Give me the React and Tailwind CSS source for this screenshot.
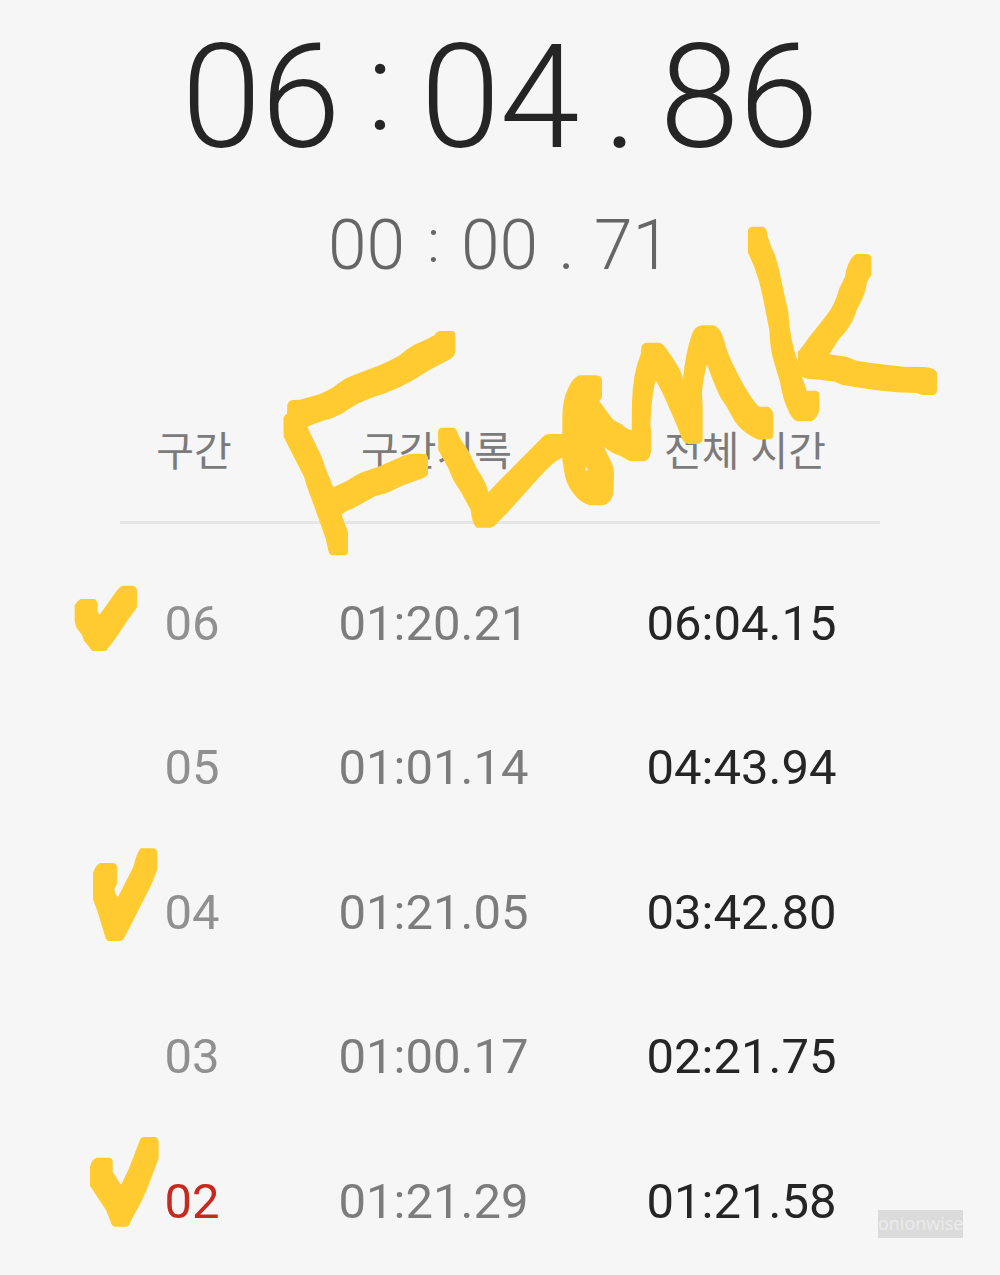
const laps = [
  { no: "06", lap: "01:20.21", total: "06:04.15" },
  { no: "05", lap: "01:01.14", total: "04:43.94" },
  { no: "04", lap: "01:21.05", total: "03:42.80" },
  { no: "03", lap: "01:00.17", total: "02:21.75" },
  { no: "02", lap: "01:21.29", total: "01:21.58", slowest: true },
];

// marker strokes, each drawn at 3x and placed with x / y
const strokes = [
  {
    x: 270,
    y: 320,
    d: "M510 33L548 33Q556 35 556 45L556 95Q554 108 542 116L478 150L430 180Q390 203 345 220Q280 240 245 262Q215 284 185 295Q140 307 112 321L155 410L165 440L190 502L230 483Q270 456 290 452L325 440L400 407Q415 401 430 401L463 402Q474 404 474 415L474 460Q472 470 460 474L400 496L350 519L315 529L250 565Q225 574 215 584L234 636L234 695Q232 706 222 706L188 706Q178 705 175 692L168 660L158 630L133 560L110 497L102 470L41 350L40 300Q40 286 51 281L52 255Q55 241 68 240L90 239L150 222Q180 208 190 202Q215 182 235 172Q280 153 325 137Q370 118 390 105Q410 88 430 76L470 58L493 46Q500 34 510 33Z",
  },
  {
    x: 270,
    y: 320,
    d: "M515 323L550 323Q560 325 563 340Q568 355 580 370Q600 398 608 420L620 445Q648 485 655 517L690 480L815 354Q825 342 840 342L900 342L900 400L860 422Q840 435 805 475L715 575L670 620L660 623L620 623Q606 612 602 570L575 520L550 480L535 445L505 390L504 335Q506 324 515 323Z",
  },
  {
    x: 540,
    y: 310,
    d: "M118 196L170 196Q186 199 186 212L186 262L178 274L220 330L245 343Q260 358 275 361L276 280Q278 190 303 130Q300 99 320 98L360 98Q372 103 385 125Q425 180 429 208Q436 130 455 75Q462 50 485 46L520 46Q540 50 552 90Q560 125 575 155L600 205Q635 270 657 290L685 290Q698 297 700 315L700 375Q698 388 688 388L655 389Q610 370 585 335L560 290L540 260Q515 205 501 162Q488 210 486 250L488 290L488 390Q484 402 470 402L445 402Q430 398 425 385L410 345L375 265Q355 222 347 212Q335 250 331 345L334 365L334 420Q330 453 312 454L270 454L240 437Q210 427 192 410L208 445Q222 470 222 490L220 550Q214 580 190 586L150 586Q120 578 100 550Q76 520 72 480L67 450L67 320Q68 270 82 240Q98 202 118 196ZM137 467L143 481L137 482Z",
  },
  {
    x: 730,
    y: 210,
    d: "M65 50L100 50Q110 52 112 75Q120 105 135 135Q145 165 155 215Q165 265 175 305Q178 380 203 455L204 425Q215 415 235 385L290 315Q315 285 328 235L345 200Q350 160 372 136L380 132L412 132Q424 135 424 145L424 195L411 215Q408 250 380 300Q375 325 347 365L325 390L298 433L350 440L380 452L430 460L520 470L580 471Q620 474 621 490L621 540Q620 555 608 555L575 555L560 549L500 547L440 541L370 530L335 524L315 515L270 509L235 507L215 500Q225 520 230 542L258 542Q268 545 268 555L268 600Q262 625 245 634L202 634Q185 630 172 595Q158 565 150 515L133 460Q120 420 118 360L105 295Q95 240 83 200Q70 160 54 128L54 60Q57 51 65 50Z",
  },
  {
    x: 60,
    y: 570,
    d: "M62 87L100 87Q111 89 113 100L113 126L119 134L170 62Q180 48 190 47L217 47Q230 49 231 60L231 112L205 148L165 208L143 236Q141 243 132 243L98 243Q91 240 86 229L72 212L66 194L55 181Q45 168 44 150L44 105Q52 92 62 87Z",
  },
  {
    x: 70,
    y: 830,
    d: "M90 99L130 99Q140 101 141 110L141 162L133 177Q135 190 143 203L190 110Q200 70 212 55L250 55Q261 57 262 68L262 118L245 162L175 300L160 328Q157 333 148 333L115 333Q107 330 104 315L83 245L69 207L69 130Q75 107 90 99Z",
  },
  {
    x: 70,
    y: 1120,
    d: "M80 113L115 113Q127 114 128 124L128 155L153 195L175 150L210 60Q213 51 222 51L255 51Q264 53 266 65L266 115L230 210Q210 255 195 280L180 308Q178 320 168 320L135 320Q125 318 122 305L108 270Q85 235 60 197L60 140Q65 118 80 113Z",
  },
];

function MainTime() {
  return (
    <div className="flex h-[145px] justify-center pl-[3px] text-[144px] leading-[145px] font-light text-[#252525]">
      <span className="w-[162px] tracking-[-0.6px]">06</span>
      <span className="w-[77px] pr-1 text-center text-[125px] leading-[124px]">:</span>
      <span className="w-[162px] tracking-[-0.6px]">04</span>
      <span className="w-[77px] pr-px text-center">.</span>
      <span className="w-[162px] tracking-[-0.6px]">86</span>
    </div>
  );
}

function LapTime() {
  return (
    <div className="mt-[41px] flex h-[70px] justify-center text-[69.5px] leading-[70px] font-light text-[#666666]">
      <span className="w-[78px]">00</span>
      <span className="w-[55px] text-center text-[62px] leading-[59px]">:</span>
      <span className="w-[78px]">00</span>
      <span className="w-[55px] text-center">.</span>
      <span className="w-[78px]">71</span>
    </div>
  );
}

function Marker() {
  return (
    <svg className="pointer-events-none absolute inset-0 h-[1275px] w-[1000px]" viewBox="0 0 1000 1275" fill="#ffcb31">
      {strokes.map((s, i) => (
        <path key={i} d={s.d} fillRule="evenodd" transform={`translate(${s.x} ${s.y}) scale(0.33333)`} />
      ))}
    </svg>
  );
}

export default function App() {
  return (
    <main className="relative h-[1275px] w-[1000px] overflow-hidden bg-[#f6f6f6] pt-[25px] font-['Roboto','Noto_Sans_CJK_KR',sans-serif]">
      <MainTime />
      <LapTime />
      <section className="mx-[120px] mt-[115px]">
        <div className="grid h-[128px] grid-cols-[148px_337px_275px] items-center border-b-[3px] border-[#e6e6e6] pb-[21px] text-center text-[41px] leading-[60px] text-[#7b7b7b] font-['Noto_Sans_CJK_KR',sans-serif]">
          <span>구간</span>
          <span>구간기록</span>
          <span className="pl-[5px] whitespace-nowrap [word-spacing:2px]">전체 시간</span>
        </div>
        <div className="pt-[27px]">
          {laps.map((lap) => (
            <div key={lap.no} className="grid h-[144.5px] grid-cols-[144px_339px_277px] items-center text-center text-[49px]">
              <span className={lap.slowest ? "text-[#c8281e]" : "text-[#909090]"}>{lap.no}</span>
              <span className="text-[#7c7c7c]">{lap.lap}</span>
              <span className="text-[#252525]">{lap.total}</span>
            </div>
          ))}
        </div>
      </section>
      <Marker />
      <div className="absolute top-[1210px] left-[878px] h-7 w-[85px] bg-[#dbdbdb] text-center text-[18px] leading-[26px] text-[#ececec] font-['Open_Sans',sans-serif]">
        onionwise
      </div>
    </main>
  );
}
